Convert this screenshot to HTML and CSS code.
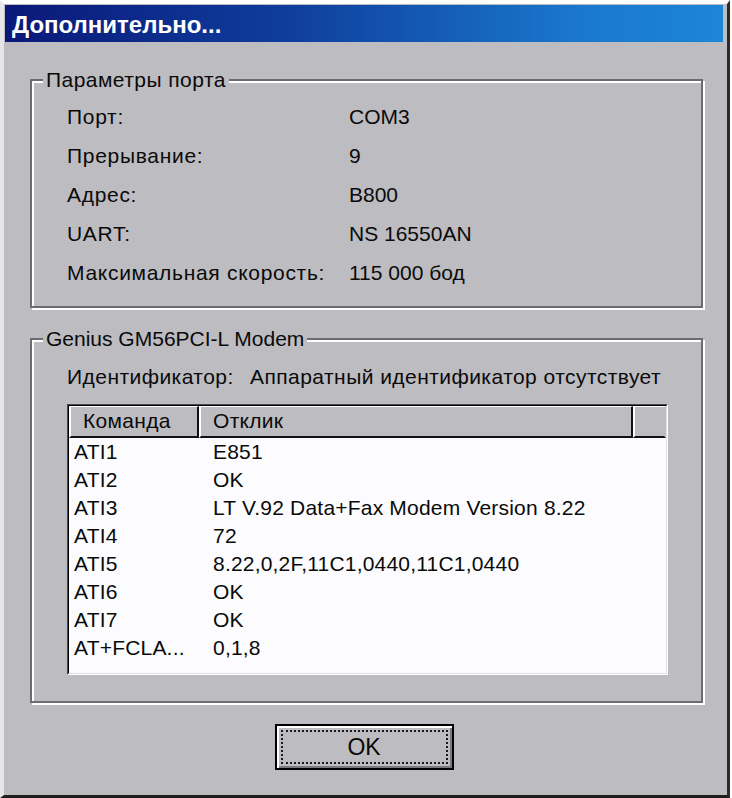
FILE: index.html
```html
<!DOCTYPE html>
<html lang="ru">
<head>
<meta charset="utf-8">
<title>Дополнительно...</title>
<link rel="stylesheet" href="styles.css">
</head>
<body>
<div class="window">
  <div class="titlebar"><span class="title">Дополнительно...</span></div>
  <div class="client">
    <fieldset class="group group-port">
      <legend class="cyr">Параметры порта</legend>
      <div class="props">
        <span class="lbl">Порт:</span><span class="val">COM3</span>
        <span class="lbl">Прерывание:</span><span class="val">9</span>
        <span class="lbl">Адрес:</span><span class="val">B800</span>
        <span class="lbl">UART:</span><span class="val">NS 16550AN</span>
        <span class="lbl">Максимальная скорость:</span><span class="val">115 000 бод</span>
      </div>
    </fieldset>
    <fieldset class="group group-modem">
      <legend>Genius GM56PCI-L Modem</legend>
      <div class="ident cyr"><span class="ident-lbl">Идентификатор:</span><span>Аппаратный идентификатор отсутствует</span></div>
      <div class="listview">
        <div class="lv-inner">
          <div class="lv-header">
            <div class="hcell h1">Команда</div>
            <div class="hcell h2">Отклик</div>
            <div class="hcell h3"></div>
          </div>
          <div class="lv-body">
            <div class="row"><span>ATI1</span><span>E851</span></div>
            <div class="row"><span>ATI2</span><span>OK</span></div>
            <div class="row"><span>ATI3</span><span>LT V.92 Data+Fax Modem Version 8.22</span></div>
            <div class="row"><span>ATI4</span><span>72</span></div>
            <div class="row"><span>ATI5</span><span>8.22,0,2F,11C1,0440,11C1,0440</span></div>
            <div class="row"><span>ATI6</span><span>OK</span></div>
            <div class="row"><span>ATI7</span><span>OK</span></div>
            <div class="row"><span>AT+FCLA...</span><span>0,1,8</span></div>
          </div>
        </div>
      </div>
    </fieldset>
    <div class="buttons">
      <button class="btn" type="button"><span class="focus">OK</span></button>
    </div>
  </div>
</div>
</body>
</html>
```
FILE: styles.css
```css
html, body {
  margin: 0;
  padding: 0;
  background: #ffffff;
}

body {
  font-family: "Liberation Sans", Arial, sans-serif;
  font-size: 21px;
  color: #0a0a0a;
}

.window {
  box-sizing: border-box;
  width: 730px;
  height: 798px;
  background: #bdbcc0;
  border-left: 4px solid #e6e6e8;
  border-top: 4px solid #ffffff;
  border-right: 3px solid #2a2a2a;
  border-bottom: 3px solid #1e1e1e;
  padding: 1px 4px 0 1px;
  display: flex;
  flex-direction: column;
}

.titlebar {
  height: 37px;
  background: linear-gradient(to right, #0a1878 0%, #0f3e9e 40%, #1a78cc 80%, #1c86d6 100%);
  display: flex;
  align-items: center;
  padding-left: 7px;
}

.title {
  color: #ffffff;
  font-weight: bold;
  font-size: 24px;
  line-height: 37px;
  padding-top: 1px;
}

.client {
  display: flex;
  flex-direction: column;
  padding-left: 25px;
}

.cyr {
  letter-spacing: 0.45px;
}

.group {
  box-sizing: border-box;
  width: 673px;
  margin: 0;
  border: 2px solid #6c6c6e;
  box-shadow: inset 2px 2px 0 #ffffff, 2px 2px 0 #ffffff;
  padding: 0;
  min-width: 0;
}

.group legend {
  margin-left: 11px;
  padding: 0 3px;
  line-height: 22px;
  background: #bdbcc0;
  font-size: 21px;
}

.group-port {
  margin-top: 27px;
  padding-top: 6px;
  padding-bottom: 14px;
}

.props {
  margin-left: 35px;
  display: grid;
  grid-template-columns: 282px 1fr;
  grid-auto-rows: 39px;
  align-items: center;
}

.lbl {
  letter-spacing: 0.7px;
}

.group-modem {
  margin-top: 20px;
  padding-top: 15px;
  padding-bottom: 26px;
}

.ident {
  margin-left: 35px;
  display: flex;
  line-height: 24px;
  height: 24px;
  white-space: nowrap;
}

.ident-lbl {
  width: 183px;
}

.listview {
  box-sizing: border-box;
  margin-top: 15px;
  margin-left: 35px;
  width: 601px;
  height: 271px;
  border: 1px solid;
  border-color: #4a4a4a #ffffff #ffffff #4a4a4a;
  background: #fcfcfe;
}

.lv-inner {
  box-sizing: border-box;
  height: 100%;
  border: 1px solid;
  border-color: #000000 #e2e2e4 #e2e2e4 #000000;
  display: flex;
  flex-direction: column;
}

.lv-header {
  display: flex;
  height: 32px;
  flex: none;
}

.hcell {
  box-sizing: border-box;
  height: 32px;
  background: #bdbcc0;
  border-top: 1px solid #ffffff;
  border-left: 2px solid #ffffff;
  border-right: 2px solid #111111;
  border-bottom: 2px solid #111111;
  padding-left: 12px;
  line-height: 28px;
  white-space: nowrap;
  letter-spacing: 0.3px;
}

.h1 { width: 130px; }
.h2 { width: 434px; }
.h3 { width: 33px; border-right-color: #bdbcc0; }

.lv-body {
  flex: 1;
  background: #fcfcfe;
}

.row {
  display: grid;
  grid-template-columns: 139px 1fr;
  height: 28px;
  line-height: 28px;
  padding-left: 5px;
  white-space: nowrap;
  letter-spacing: 0.2px;
}

.buttons {
  display: flex;
  justify-content: center;
  margin-top: 21px;
  margin-left: -25px;
}

.btn {
  box-sizing: border-box;
  width: 179px;
  height: 46px;
  margin: 0;
  padding: 4px;
  border: 2px solid #000000;
  background: #bdbcc0;
  box-shadow: inset 2px 2px 0 #ffffff, inset -2px -2px 0 #7a7a7c;
  font-family: "Liberation Sans", Arial, sans-serif;
  font-size: 23px;
  color: #0a0a0a;
  display: flex;
}

.focus {
  box-sizing: border-box;
  flex: 1;
  border: 2px dotted #1a1a1a;
  display: flex;
  align-items: center;
  justify-content: center;
  line-height: 30px;
}
```
